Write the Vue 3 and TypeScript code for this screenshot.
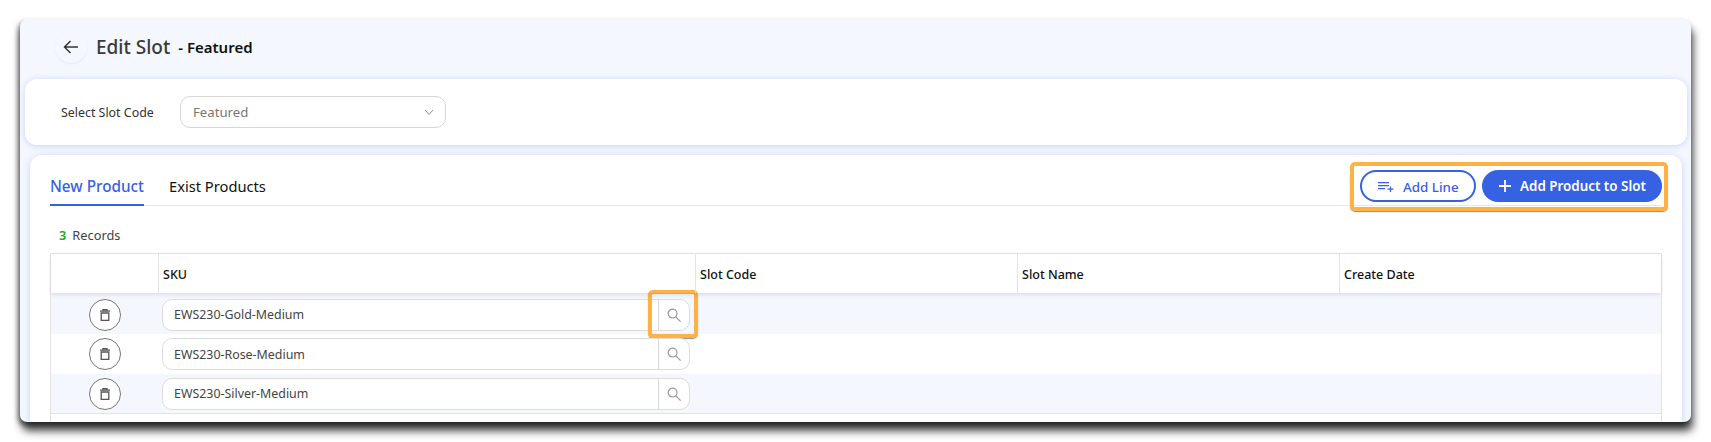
<script setup lang="ts">
const rows: string[] = ['EWS230-Gold-Medium', 'EWS230-Rose-Medium', 'EWS230-Silver-Medium']
const columns: string[] = ['SKU', 'Slot Code', 'Slot Name', 'Create Date']
</script>

<template>
  <div class="page">
    <div class="window">
      <header class="head">
        <span class="back">
          <svg width="16" height="16" viewBox="0 0 16 16" fill="none" stroke="#333" stroke-width="1.5">
            <path d="M15 8H1.5M7.5 2L1.5 8l6 6" />
          </svg>
        </span>
        <h1>Edit Slot</h1>
        <span class="sub">- Featured</span>
      </header>

      <section class="card filter">
        <label>Select Slot Code</label>
        <div class="select">
          <span>Featured</span>
          <svg width="10" height="7" viewBox="0 0 10 7" fill="none" stroke="#888" stroke-width="1">
            <path d="M1 1l4 4.5L9 1" />
          </svg>
        </div>
      </section>

      <section class="card main">
        <div class="tabbar">
          <span class="tab active">New Product</span>
          <span class="tab">Exist Products</span>
          <div class="actions">
            <button class="btn outline">
              <svg width="16" height="10" viewBox="0 0 16 10" fill="none" stroke="#3661e3" stroke-width="1.3">
                <path d="M0 .7h11M0 3.7h11M0 6.7h7M9.5 7.2h6M12.5 4.4v5.6" />
              </svg>
              <span>Add Line</span>
            </button>
            <button class="btn solid">
              <svg width="12" height="12" viewBox="0 0 12 12" fill="none" stroke="#fff" stroke-width="1.8">
                <path d="M6 0v12M0 6h12" />
              </svg>
              <span>Add Product to Slot</span>
            </button>
            <span class="mark mark-actions"></span>
          </div>
        </div>

        <div class="records"><b>3</b>Records</div>

        <div class="table">
          <div class="thead">
            <div class="cell-action"></div>
            <div v-for="c in columns" :key="c" class="th">{{ c }}</div>
          </div>
          <div
            v-for="(r, i) in rows"
            :key="r"
            class="tr"
            :class="{ odd: i % 2 === 0, first: i === 0, last: i === rows.length - 1 }"
          >
            <div class="cell-action">
              <span class="trash">
                <svg width="10" height="12" viewBox="0 0 10 12" fill="none" stroke="#555" stroke-width="1.3">
                  <path d="M0 2.2h10M3 1.9V.7h4v1.2M1.2 4v7.3h7.6V4z" />
                </svg>
              </span>
            </div>
            <div class="sku">
              <div class="input">
                <span class="value">{{ r }}</span>
                <span class="search">
                  <svg width="14" height="14" viewBox="0 0 14 14" fill="none" stroke="#999" stroke-width="1.2">
                    <circle cx="5.6" cy="5.6" r="4.4" />
                    <path d="M8.8 8.8l4.8 4.8" />
                  </svg>
                </span>
                <span v-if="i === 0" class="mark mark-search"></span>
              </div>
            </div>
          </div>
        </div>
      </section>
    </div>
  </div>
</template>

<style>
html, body { margin: 0; background: #fff; }
</style>

<style scoped>
.page {
  box-sizing: border-box;
  width: 1711px;
  height: 442px;
  padding: 19px 20px 20px;
}
.window {
  box-sizing: border-box;
  height: 403px;
  padding: 0 4px 0 5px;
  background: #f4f7fe;
  border-radius: 8px 8px 7px 7px;
  box-shadow: 2px 9px 9px rgba(0, 0, 0, 0.72), -2px 3px 5px rgba(0, 0, 0, 0.5);
  overflow: hidden;
  font-family: "Noto Sans", "Open Sans", sans-serif;
  color: #333;
}
.head {
  display: flex;
  align-items: center;
  box-sizing: border-box;
  height: 60px;
  padding: 0 0 4px 30px;
}
.back {
  display: flex;
  align-items: center;
  justify-content: center;
  width: 32px;
  height: 32px;
  border-radius: 50%;
  box-shadow: 0 1px 2px rgba(120, 140, 200, 0.12);
}
h1 {
  margin: 0 0 0 9px;
  font-size: 19px;
  font-weight: 500;
  color: #3a3a3a;
}
.sub {
  margin-left: 8px;
  font-size: 15px;
  font-weight: 600;
  color: #111;
}
.card {
  background: #fff;
  border-radius: 12px;
  box-shadow: 0 1px 6px rgba(70, 110, 240, 0.25);
}
.filter {
  display: flex;
  align-items: center;
  height: 66px;
  padding-left: 36px;
}
label {
  flex: none;
  width: 119px;
  font-size: 12.4px;
  color: #333;
}
.select {
  box-sizing: border-box;
  display: flex;
  align-items: center;
  justify-content: space-between;
  width: 266px;
  height: 32px;
  padding: 0 11px 0 12px;
  border: 1px solid #d6d6d6;
  border-radius: 10px;
  font-size: 13.2px;
  color: #777;
}
.main {
  height: 290px;
  margin: 10px 5px 0;
  padding: 0 20px;
}
.tabbar {
  position: relative;
  display: flex;
  align-items: flex-end;
  height: 50px;
  gap: 25px;
  border-bottom: 1px solid #e8e8ec;
}
.tab {
  padding-bottom: 8px;
  margin-bottom: -1px;
  border-bottom: 2px solid transparent;
  font-size: 14.7px;
  line-height: 20px;
  color: #111;
}
.tab.active {
  color: #3661e3;
  font-size: 15.3px;
  font-weight: 500;
  border-bottom-color: #3661e3;
}
.actions {
  position: absolute;
  top: 15px;
  right: 0;
  display: flex;
  gap: 6px;
}
.btn {
  box-sizing: border-box;
  display: flex;
  align-items: center;
  height: 32px;
  border-radius: 16px;
  font-family: inherit;
  font-size: 13.4px;
  font-weight: 600;
}
.outline {
  width: 116px;
  gap: 9px;
  padding: 2px 0 0 16px;
  background: #fff;
  border: 2px solid #3661e3;
  color: #3661e3;
  font-weight: 500;
}
.solid {
  width: 180px;
  gap: 9px;
  padding: 0 0 0 17px;
  background: #3661e3;
  border: none;
  color: #fff;
}
.mark {
  position: absolute;
  box-sizing: border-box;
  border: 4px solid #feb144;
  border-radius: 5px;
  box-shadow: 0 1px 1px rgba(0, 0, 0, 0.45);
  pointer-events: none;
}
.mark-actions {
  left: -10px;
  right: -6px;
  top: -8px;
  height: 49px;
}
.records {
  display: flex;
  align-items: center;
  gap: 6px;
  height: 20px;
  margin-top: 19px;
  padding-left: 9px;
  font-size: 12.8px;
  color: #444;
}
.records b {
  color: #22a722;
  font-weight: 600;
}
.table {
  box-sizing: border-box;
  height: 190px;
  margin-top: 8px;
  border: 1px solid #e3e3e6;
  border-bottom: none;
}
.thead {
  position: relative;
  z-index: 1;
  display: grid;
  grid-template-columns: 107px 537px 322px 322px 1fr;
  height: 39px;
  box-shadow: 0 2px 4px rgba(0, 0, 0, 0.1);
}
.th {
  display: flex;
  align-items: center;
  padding: 2px 0 0 4px;
  border-left: 1px solid #e3e3e6;
  font-size: 12.5px;
  font-weight: 500;
  color: #111;
}
.tr {
  box-sizing: border-box;
  display: flex;
  height: 40px;
}
.tr.first {
  height: 41px;
  padding-top: 2px;
}
.tr.odd { background: #f4f7fe; }
.tr.last { border-bottom: 1px solid #e3e3e6; }
.cell-action {
  display: flex;
  align-items: center;
  justify-content: center;
  width: 107px;
}
.trash {
  box-sizing: border-box;
  display: flex;
  align-items: center;
  justify-content: center;
  width: 32px;
  height: 32px;
  border: 1px solid #777;
  border-radius: 50%;
  background: #fff;
}
.sku {
  display: flex;
  align-items: center;
  padding-left: 4px;
}
.input {
  position: relative;
  box-sizing: border-box;
  display: flex;
  align-items: center;
  width: 528px;
  height: 32px;
  background: #fff;
  border: 1px solid #dcdcdc;
  border-radius: 10px;
}
.value {
  flex: 1;
  padding-left: 11px;
  font-size: 12.4px;
  color: #444;
}
.search {
  display: flex;
  align-items: center;
  justify-content: center;
  width: 30px;
  height: 100%;
  border-left: 1px solid #d8d8d8;
}
.mark-search {
  right: -9px;
  top: -10px;
  width: 50px;
  height: 48px;
}
</style>
